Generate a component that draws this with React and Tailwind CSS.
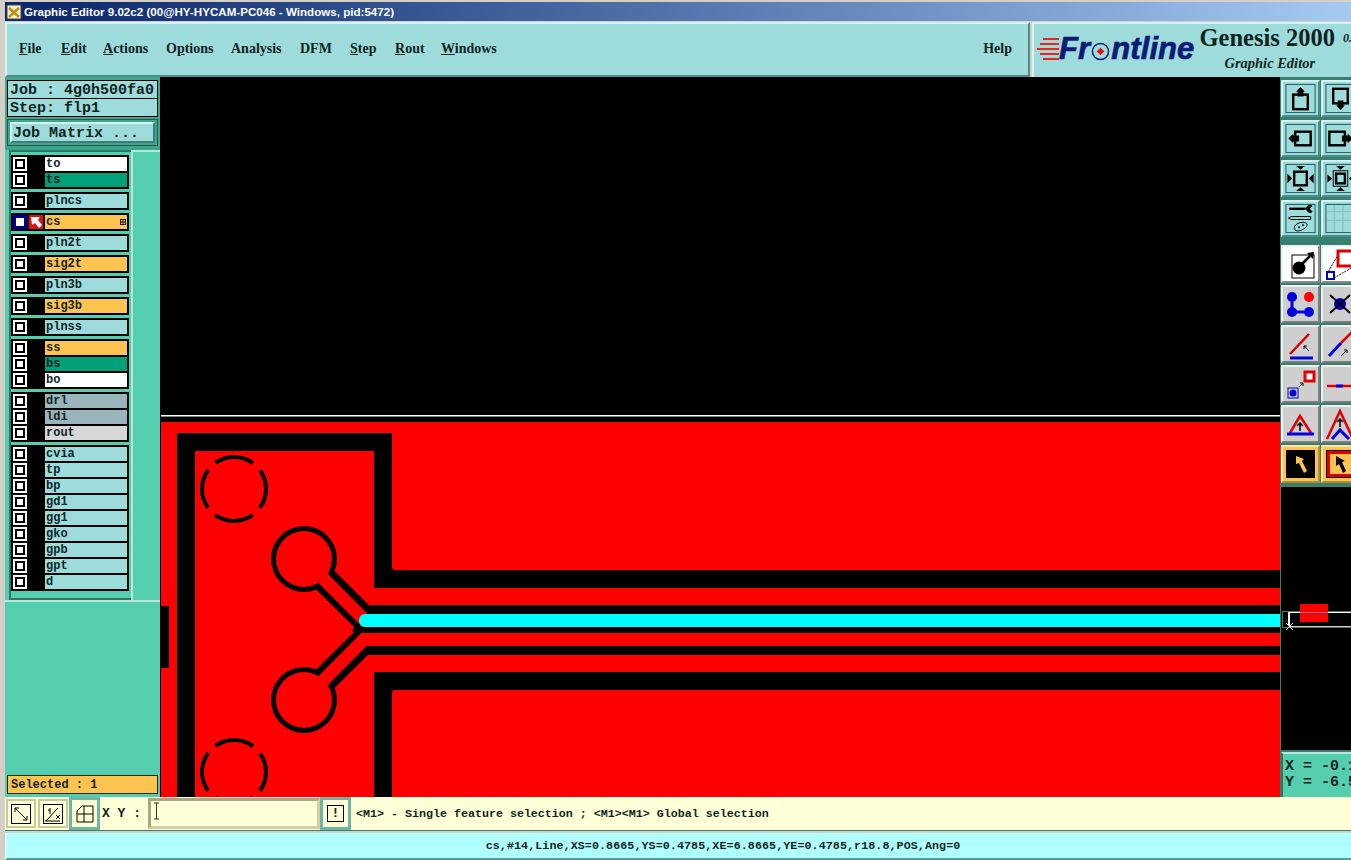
import React from "react";

const layerGroups = [
  [{ name: "to", color: "bg-white" }, { name: "ts", color: "bg-[#00a078]" }],
  [{ name: "plncs", color: "bg-[#9edcdc]" }],
  [{ name: "cs", color: "bg-[#ffc44f]", active: true }],
  [{ name: "pln2t", color: "bg-[#9edcdc]" }],
  [{ name: "sig2t", color: "bg-[#ffc44f]" }],
  [{ name: "pln3b", color: "bg-[#9edcdc]" }],
  [{ name: "sig3b", color: "bg-[#ffc44f]" }],
  [{ name: "plnss", color: "bg-[#9edcdc]" }],
  [{ name: "ss", color: "bg-[#ffc44f]" }, { name: "bs", color: "bg-[#00a078]" }, { name: "bo", color: "bg-white" }],
  [{ name: "drl", color: "bg-[#9ab4bc]" }, { name: "ldi", color: "bg-[#9ab4bc]" }, { name: "rout", color: "bg-[#d8d8d8]" }],
  ["cvia", "tp", "bp", "gd1", "gg1", "gko", "gpb", "gpt", "d"].map((name) => ({ name, color: "bg-[#9edcdc]" })),
];

const menuItems = [
  { pre: "", key: "F", post: "ile", cls: "w-[42px]" },
  { pre: "", key: "E", post: "dit", cls: "w-[42px]" },
  { pre: "", key: "A", post: "ctions", cls: "w-[63px]" },
  { pre: "O", key: "p", post: "tions", cls: "w-[65px]" },
  { pre: "Analysis", key: "", post: "", cls: "w-[69px]" },
  { pre: "DFM", key: "", post: "", cls: "w-[50px]" },
  { pre: "", key: "S", post: "tep", cls: "w-[45px]" },
  { pre: "", key: "R", post: "out", cls: "w-[46px]" },
  { pre: "", key: "W", post: "indows", cls: "w-[60px]" },
];

function Checkbox({ active }) {
  return (
    <div className={`w-[14px] h-[14px] flex items-center justify-center shrink-0 ${active ? "bg-[#000090]" : "bg-white"}`}>
      <div className={active ? "w-[8px] h-[8px] bg-white" : "w-[10px] h-[10px] border-2 border-black bg-white"} />
    </div>
  );
}

function LayerRow({ layer }) {
  return (
    <div className="flex h-[14px] gap-[2px]">
      <Checkbox active={layer.active} />
      <div className={`w-[14px] h-[14px] shrink-0 ${layer.active ? "bg-[#e01010]" : "bg-black"}`}>
        {layer.active && (
          <svg viewBox="0 0 14 14" className="w-[14px] h-[14px]">
            <polygon points="2,2 11,2 9,5 13,10 10,13 6,8 3,10" fill="#fff" />
          </svg>
        )}
      </div>
      <div className={`relative w-[82px] h-[14px] pl-[1px] leading-[15px] text-[12px] font-bold text-[#10241f] ${layer.color}`}>
        {layer.name}
        {layer.active && (
          <svg viewBox="0 0 7 7" className="absolute right-[1px] top-[4px] w-[6px] h-[6px]">
            <rect x="0.5" y="0.5" width="6" height="6" fill="none" stroke="#000" />
            <path d="M3.5 1v5M1 3.5h5" stroke="#000" />
          </svg>
        )}
      </div>
    </div>
  );
}

const toneClass = {
  teal: "bg-[#9edcdc] border-t-[#d6f2f2] border-l-[#d6f2f2] border-b-[#4d8b86] border-r-[#4d8b86]",
  white: "bg-white border-t-[#eeeeee] border-l-[#eeeeee] border-b-[#8a8a8a] border-r-[#8a8a8a]",
  gray: "bg-[#cfcfcf] border-t-[#f0f0f0] border-l-[#f0f0f0] border-b-[#7c7c7c] border-r-[#7c7c7c]",
  orange: "bg-[#ffc44f] border-t-[#ffe2a6] border-l-[#ffe2a6] border-b-[#b38a36] border-r-[#b38a36]",
};

function ToolButton({ tone, children }) {
  return (
    <div className={`w-[39px] h-full shrink-0 border-2 ${toneClass[tone]}`}>
      <svg viewBox="0 0 35 34" className="w-[35px] h-full">
        {children}
      </svg>
    </div>
  );
}

const Frame = ({ color = "#1c5a5a" }) => <rect x="2.5" y="2.5" width="30" height="29" fill="none" stroke={color} />;

function PcbCanvas() {
  return (
    <svg viewBox="160 77 1120 720" className="w-[1120px] h-[720px] block shrink-0 bg-black">
      <rect x="161" y="415" width="1119" height="1.5" fill="#fff" />
      <rect x="161" y="422" width="1119" height="375" fill="#ff0000" />
      <rect x="160" y="606" width="9" height="62" fill="#000" />
      <path d="M186 797V442H383V579H1280" fill="none" stroke="#000" strokeWidth="18" />
      <path d="M1280 681H383V797" fill="none" stroke="#000" strokeWidth="18" />
      <path d="M392 570h3a3 3 0 0 1-3-3zM392 690h3a3 3 0 0 0-3 3z" fill="#000" />

      {/* thermal pads */}
      <circle cx="234" cy="489" r="32" fill="none" stroke="#000" strokeWidth="4" strokeDasharray="40.27 10" strokeDashoffset="20.13" />
      <circle cx="234" cy="772" r="32" fill="none" stroke="#000" strokeWidth="4" strokeDasharray="40.27 10" strokeDashoffset="20.13" />

      {/* clearance round the two traces */}
      <path d="M304 559L366 620.5M304 700L365 639.5" stroke="#000" strokeWidth="26" fill="none" />
      <path d="M352 630L370 612V648Z" fill="#000" />
      <rect x="368" y="605" width="912" height="50" fill="#000" />
      <circle cx="304" cy="559" r="33" fill="#000" />
      <circle cx="304" cy="700" r="33" fill="#000" />
      <path d="M304 559L365 620.5H1280M304 700L364 639.5H1280" stroke="#ff0000" strokeWidth="13" fill="none" />
      <circle cx="304" cy="559" r="28" fill="#ff0000" />
      <circle cx="304" cy="700" r="28" fill="#ff0000" />
      <rect x="359" y="614" width="930" height="13" rx="6" fill="#00ffff" />
    </svg>
  );
}

function ToolPanel() {
  return (
    <div className="w-[71px] shrink-0 flex flex-col bg-[#35806f] border-l border-l-[#35806f] overflow-hidden">
      <div className="flex flex-col gap-[3px] pt-[3px] pb-[4px] h-[167px]">
        <div className="flex gap-[1px] h-[37px]">
          <ToolButton tone="teal">
            <Frame />
            <rect x="10" y="13" width="15" height="15" fill="none" stroke="#000" strokeWidth="2.5" />
            <polygon points="17.5,5 22,10 20.5,10 20.5,15 14.5,15 14.5,10 13,10" fill="#000" />
          </ToolButton>
          <ToolButton tone="teal">
            <Frame />
            <rect x="10" y="7" width="15" height="15" fill="none" stroke="#000" strokeWidth="2.5" />
            <polygon points="17.5,29 22,24 20.5,24 20.5,19 14.5,19 14.5,24 13,24" fill="#000" />
          </ToolButton>
        </div>
        <div className="flex gap-[1px] h-[37px]">
          <ToolButton tone="teal">
            <Frame />
            <rect x="12" y="10" width="16" height="14" fill="none" stroke="#000" strokeWidth="2.5" />
            <polygon points="5,17 10,12 10,14 16,14 16,20 10,20 10,22" fill="#000" />
          </ToolButton>
          <ToolButton tone="teal">
            <Frame />
            <rect x="6" y="10" width="16" height="14" fill="none" stroke="#000" strokeWidth="2.5" />
            <polygon points="30,17 25,12 25,14 19,14 19,20 25,20 25,22" fill="#000" />
          </ToolButton>
        </div>
        <div className="flex gap-[1px] h-[37px]">
          <ToolButton tone="teal">
            <Frame />
            <rect x="11" y="10" width="13" height="14" fill="none" stroke="#000" strokeWidth="2.5" />
            <polygon points="17.5,8 13,4 22,4" fill="#000" />
            <polygon points="17.5,26 13,30 22,30" fill="#000" />
            <polygon points="9,17 4,12 4,22" fill="#000" />
            <polygon points="26,17 31,12 31,22" fill="#000" />
          </ToolButton>
          <ToolButton tone="teal">
            <Frame />
            <rect x="13" y="12" width="9" height="10" fill="none" stroke="#000" strokeWidth="2.5" />
            <rect x="10" y="9" width="15" height="16" fill="none" stroke="#000" />
            <polygon points="17.5,8 13,4 22,4" fill="#000" />
            <polygon points="17.5,26 13,30 22,30" fill="#000" />
            <polygon points="9,17 4,13 4,21" fill="#000" />
            <polygon points="26,17 31,13 31,21" fill="#000" />
          </ToolButton>
        </div>
        <div className="flex gap-[1px] h-[37px]">
          <ToolButton tone="teal">
            <Frame />
            <path d="M6 7h17" stroke="#000" strokeWidth="2.5" />
            <path d="M30 4a4 4 0 1 0 0 6l-3-3z" fill="#000" />
            <path d="M8 15h20M8 18h20M28 15v3M8 15l-3 1.5 3 1.5" stroke="#000" fill="none" />
            <path d="M12 29c-3-4 2-8 8-8 5 0 5 3 3 5-3 3-8 5-11 3z" fill="none" stroke="#000" />
            <circle cx="16" cy="26" r="1" fill="#000" />
            <circle cx="20" cy="24" r="1" fill="#000" />
          </ToolButton>
          <ToolButton tone="teal">
            <Frame />
            <path d="M11 3v28M20 3v28M3 10h29M3 19h29" stroke="#85b9bc" />
          </ToolButton>
        </div>
      </div>

      <div className="flex flex-col gap-[2px] pt-[1px] h-[243px]">
        <div className="flex gap-[1px] h-[38px]">
          <ToolButton tone="white">
            <rect x="9" y="8" width="22" height="23" fill="none" stroke="#000" />
            <circle cx="16" cy="21" r="6.5" fill="#000" />
            <path d="M19 17L27 9" stroke="#000" strokeWidth="2.5" />
            <polygon points="31,5 30,12 24,6" fill="#000" />
          </ToolButton>
          <ToolButton tone="white">
            <path d="M4 27L16 6M11 31L30 20" stroke="#000" strokeDasharray="2 1" />
            <rect x="4" y="25" width="7" height="7" fill="none" stroke="#0000d0" strokeWidth="2" />
            <rect x="15" y="4" width="16" height="15" fill="none" stroke="#e00000" strokeWidth="3" />
          </ToolButton>
        </div>
        <div className="flex gap-[1px] h-[38px]">
          <ToolButton tone="gray">
            <path d="M9 10V25H26" stroke="#0000e0" strokeWidth="3" fill="none" />
            <circle cx="9" cy="10" r="5" fill="#0000e0" />
            <circle cx="9" cy="25" r="5" fill="#0000e0" />
            <circle cx="26" cy="25" r="5" fill="#0000e0" />
            <circle cx="26" cy="10" r="5" fill="#ff0000" />
          </ToolButton>
          <ToolButton tone="gray">
            <circle cx="17" cy="17" r="6" fill="#0000c0" />
            <path d="M7 8L27 26M27 8L7 26" stroke="#000" strokeWidth="2" />
          </ToolButton>
        </div>
        <div className="flex gap-[1px] h-[38px]">
          <ToolButton tone="gray">
            <path d="M7 27L26 7" stroke="#e00000" strokeWidth="2.5" />
            <path d="M7 31H30" stroke="#0000e0" strokeWidth="3" />
            <path d="M26 24L21 19M21 19v3M21 19h3" stroke="#000" fill="none" />
          </ToolButton>
          <ToolButton tone="gray">
            <path d="M18 16L30 4" stroke="#e00000" strokeWidth="2.5" />
            <path d="M6 29L18 16" stroke="#0000e0" strokeWidth="3" />
            <path d="M18 29L24 23M24 23h-3M24 23v3" stroke="#000" fill="none" />
          </ToolButton>
        </div>
        <div className="flex gap-[1px] h-[38px]">
          <ToolButton tone="gray">
            <rect x="22" y="5" width="9" height="9" fill="#fff" stroke="#e00000" strokeWidth="3" />
            <rect x="5" y="21" width="10" height="10" fill="none" stroke="#0000d0" />
            <circle cx="10" cy="26" r="3.5" fill="#0000d0" />
            <path d="M16 20L20 16M20 16h-3M20 16v3" stroke="#000" fill="none" />
          </ToolButton>
          <ToolButton tone="gray">
            <path d="M4 19H32" stroke="#e00000" strokeWidth="2.5" />
            <path d="M13 19H20" stroke="#0000e0" strokeWidth="3" />
          </ToolButton>
        </div>
        <div className="flex gap-[1px] h-[38px]">
          <ToolButton tone="gray">
            <path d="M7 26L17 9L28 26" fill="none" stroke="#e00000" strokeWidth="2.5" />
            <path d="M4 27H31" stroke="#0000e0" strokeWidth="3" />
            <path d="M17 24V16M14 19L17 16L20 19" stroke="#000" fill="none" strokeWidth="1.5" />
          </ToolButton>
          <ToolButton tone="gray">
            <path d="M4 32L17 4L30 32" fill="none" stroke="#e00000" strokeWidth="2.5" />
            <path d="M9 32L17 23L26 32" fill="none" stroke="#0000e0" strokeWidth="3" />
            <path d="M17 20V12M14 15L17 12L20 15" stroke="#000" fill="none" strokeWidth="1.5" />
          </ToolButton>
        </div>
        <div className="flex gap-[1px] h-[38px]">
          <ToolButton tone="orange">
            <rect x="3" y="3" width="29" height="28" fill="#000" />
            <polygon points="13,9 13,17 16,16 21,26 24,24 19,14 21,12" fill="#ffc44f" />
          </ToolButton>
          <ToolButton tone="orange">
            <rect x="3.5" y="3.5" width="28" height="27" fill="#ffc44f" stroke="#000" />
            <rect x="5.5" y="5.5" width="24" height="23" fill="none" stroke="#e00000" strokeWidth="3" />
            <polygon points="13,9 13,19 16,17 20,26 23,24 19,15 22,14" fill="#000" />
          </ToolButton>
        </div>
      </div>

      <svg viewBox="1281 487 70 263" className="w-[70px] h-[263px] shrink-0 bg-black block">
        <rect x="1282.5" y="611.5" width="70" height="16" fill="none" stroke="#5a7a20" />
        <rect x="1300" y="604" width="28" height="18" fill="#ff0000" />
        <path d="M1289 612.5H1351" stroke="#fff" />
        <path d="M1300 612.5H1328" stroke="#a070a0" />
        <path d="M1289 626.5H1351" stroke="#d8c8f0" />
        <rect x="1288" y="612" width="2" height="14" fill="#fff" />
        <path d="M1286 623L1293 630M1293 623L1286 630" stroke="#fff" />
      </svg>

      <div className="mt-[2px] flex-1 bg-[#55cdaf] border-l-2 border-t-2 border-l-[#2e7564] border-t-[#b5e8dc] pl-[2px] pt-[5px] text-[15px] leading-[16px] font-bold text-[#10241f] whitespace-nowrap">
        <div>X = -0.1</div>
        <div>Y = -6.5</div>
      </div>
    </div>
  );
}

export default function App() {
  return (
    <div className="w-[1351px] h-[860px] overflow-hidden bg-[#d4d0c8] pt-[2px] pl-[5px] flex flex-col font-['Liberation_Mono',monospace]">
      {/* title bar */}
      <div className="h-[19px] shrink-0 flex items-center gap-[2px] pl-[1px] bg-gradient-to-r from-[#0a246a] to-[#a6caf0] text-white text-[11.6px] font-bold font-['Liberation_Sans',sans-serif] whitespace-nowrap">
        <svg viewBox="0 0 16 16" className="w-[16px] h-[16px] shrink-0">
          <rect x="1" y="1" width="14" height="14" fill="#f4f0d0" stroke="#444" />
          <path d="M3 4L13 13M13 4L3 13" stroke="#c09010" strokeWidth="2.5" />
        </svg>
        <span>Graphic Editor 9.02c2 (00@HY-HYCAM-PC046 - Windows, pid:5472)</span>
      </div>

      {/* menu + logo */}
      <div className="h-[55px] shrink-0 mt-[1px] flex">
        <div className="w-[1025px] shrink-0 flex items-center pl-[12px] pr-[16px] pb-[2px] bg-[#9edcdc] border-2 border-t-[#d6f2f2] border-l-[#d6f2f2] border-b-[#4d8b86] border-r-[#4d8b86] font-['Liberation_Serif',serif] font-bold text-[14px] text-[#10241f]">
          {menuItems.map((item) => (
            <span key={item.pre + item.key + item.post} className={`${item.cls} shrink-0`}>
              {item.pre}
              {item.key && <u>{item.key}</u>}
              {item.post}
            </span>
          ))}
          <span className="ml-auto">Help</span>
        </div>
        <div className="flex-1 ml-[2px] bg-[#9edcdc] border-t-2 border-l-2 border-t-[#d6f2f2] border-l-[#d6f2f2] flex items-start overflow-hidden whitespace-nowrap">
          <svg viewBox="0 0 22 24" className="w-[22px] h-[24px] ml-[3px] mt-[13px] shrink-0">
            <path d="M6 1H22V3H6zM3 6H22V8H3zM0 11H22V13H0zM3 16H22V18H3zM6 21H22V23H6z" fill="#ee2020" />
          </svg>
          <div className="mt-[7px] flex items-center text-[31px] leading-[36px] font-bold italic font-['Liberation_Sans',sans-serif] text-[#0c1a78] [-webkit-text-stroke:0.7px_#0c1a78] tracking-[0.1px]">
            <span>Fr</span>
            <svg viewBox="0 0 20 20" className="w-[19px] h-[19px] mt-[5px] mx-[1px] shrink-0">
              <circle cx="10" cy="10" r="8.5" fill="none" stroke="#0c1a78" strokeWidth="1.5" />
              <polygon points="10,6 14,10 10,14 6,10" fill="#e01010" />
            </svg>
            <span>ntline</span>
          </div>
          <div className="ml-[5px] font-['Liberation_Serif',serif] font-bold text-center text-[#10241f]">
            <div className="text-[24.5px] leading-[26px] mt-[1px]">
              Genesis 2000 <span className="italic text-[12px] align-top ml-[2px]">0.</span>
            </div>
            <div className="text-[14.5px] leading-[16px] italic mt-[4px] pr-[12px]">Graphic Editor</div>
          </div>
        </div>
      </div>

      {/* work area */}
      <div className="h-[720px] shrink-0 flex">
        <div className="w-[155px] shrink-0 flex flex-col bg-[#55cdaf]">
          <div className="h-[73px] shrink-0 bg-[#3fa58c] px-[2px] pt-[3px] flex flex-col text-[#10241f] font-bold">
            <div className="h-[19px] border border-black bg-[#9edcdc] text-[15px] leading-[19px] pl-[2px] whitespace-nowrap">Job : 4g0h500fa0</div>
            <div className="h-[19px] -mt-[1px] border border-black bg-[#9edcdc] text-[15px] leading-[20px] pl-[2px]">Step: flp1</div>
            <div className="mt-[2px] h-[27px] border border-[#1f5a4c] p-[2px]">
              <div className="h-full bg-[#9edcdc] border-2 border-t-[#d6f2f2] border-l-[#d6f2f2] border-b-[#3d7f78] border-r-[#3d7f78] text-[15px] leading-[20px] pl-[1px]">Job Matrix ...</div>
            </div>
          </div>

          <div className="h-[452px] shrink-0 flex border-b-2 border-b-[#b5e8dc]">
            <div className="ml-[4px] w-[122px] shrink-0 bg-[#55cdaf] border-l-2 border-t-2 border-b-2 border-[#2e7564] flex flex-col gap-[3px] pt-[3px]">
              {layerGroups.map((group) => (
                <div key={group[0].name} className="w-[118px] bg-black p-[2px] flex flex-col gap-[2px]">
                  {group.map((layer) => (
                    <LayerRow key={layer.name} layer={layer} />
                  ))}
                </div>
              ))}
            </div>
            <div className="flex-1 border-l-2 border-t-2 border-[#b5e8dc]" />
          </div>

          <div className="flex-1" />
          <div className="h-[19px] mx-[2px] mb-[3px] border border-[#1f2a20] bg-[#ffc44f] text-[12px] leading-[19px] font-bold pl-[3px] text-[#10241f]">Selected : 1</div>
        </div>

        <PcbCanvas />
        <ToolPanel />
      </div>

      {/* command line */}
      <div className="h-[34px] shrink-0 flex bg-[#ffffd8] text-[#10241f] font-bold border-b border-b-[#35806f]">
        <div className="w-[32px] pl-[1px] py-[2px] shrink-0">
          <div className="w-[30px] h-[29px] border-2 border-[#c8c8a0] flex items-center justify-center">
            <svg viewBox="0 0 22 22" className="w-[22px] h-[22px]">
              <rect x="1.5" y="1.5" width="19" height="19" fill="none" stroke="#000" />
              <path d="M5 5L17 17M5 5h4M5 5v4M17 17h-4M17 17v-4" stroke="#000" fill="none" />
            </svg>
          </div>
        </div>
        <div className="w-[32px] pl-[1px] py-[2px] shrink-0">
          <div className="w-[30px] h-[29px] border-2 border-[#c8c8a0] flex items-center justify-center">
            <svg viewBox="0 0 22 22" className="w-[22px] h-[22px]">
              <rect x="1.5" y="1.5" width="19" height="19" fill="none" stroke="#000" />
              <path d="M3 18H18M4 18L16 5M8 5v6M6 7h2M14 12l4 4M18 12l-4 4" stroke="#000" fill="none" />
            </svg>
          </div>
        </div>
        <div className="w-[31px] shrink-0 bg-[#ffffd8] border-[3px] border-[#6fb5a3] flex items-center justify-center">
          <svg viewBox="0 0 18 18" className="w-[18px] h-[18px]">
            <path d="M1 6L6 1H17V17H1zM8 1V17M1 9H17" stroke="#000" fill="none" />
          </svg>
        </div>
        <div className="w-[48px] shrink-0 pl-[2px] flex items-center text-[13px]">X Y :</div>
        <div className="w-[172px] shrink-0 my-[1px] bg-[#ffffd8] border-[3px] border-t-[#a8a878] border-l-[#a8a878] border-b-[#d0d0a8] border-r-[#d0d0a8] pl-[2px] pt-[1px]">
          <svg viewBox="0 0 7 18" className="w-[7px] h-[18px]">
            <path d="M1 1H6M3.5 1V17M1 17H6" stroke="#333" fill="none" />
          </svg>
        </div>
        <div className="w-[31px] shrink-0 border-[3px] border-[#6fb5a3] flex items-center justify-center">
          <div className="w-[17px] h-[17px] border border-black flex items-center justify-center text-[13px] leading-none">!</div>
        </div>
        <div className="flex-1 pl-[5px] pt-[2px] flex items-center text-[11.67px] whitespace-nowrap">
          &lt;M1&gt; - Single feature selection ; &lt;M1&gt;&lt;M1&gt; Global selection
        </div>
      </div>

      {/* status line */}
      <div className="flex-1 mt-[2px] bg-[#b0ffff] border-l-2 border-l-[#d8ffff] flex items-center justify-center text-[11.67px] tracking-[0.09px] font-bold text-[#10241f] pl-[88px] pt-[3px] border-b-2 border-b-[#5b9a9a]">
        cs,#14,Line,XS=0.8665,YS=0.4785,XE=6.8665,YE=0.4785,r18.8,POS,Ang=0
      </div>
    </div>
  );
}
